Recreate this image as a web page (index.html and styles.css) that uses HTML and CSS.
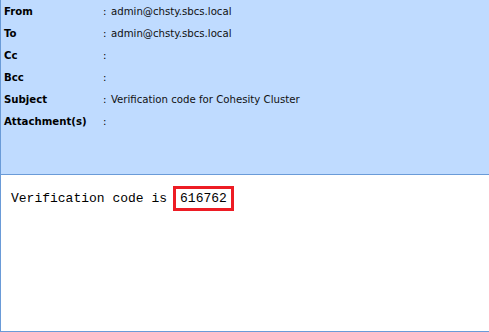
FILE: index.html
```html
<!DOCTYPE html>
<html>
<head>
  <meta charset="UTF-8">
  <link rel="stylesheet" href="styles.css">
</head>
<body>
  <div class="mail">
    <div class="mail-header">
      <div class="field">
        <span class="field-label">From</span>
        <span class="field-colon">:</span>
        <span class="field-value">admin@chsty.sbcs.local</span>
      </div>
      <div class="field">
        <span class="field-label">To</span>
        <span class="field-colon">:</span>
        <span class="field-value">admin@chsty.sbcs.local</span>
      </div>
      <div class="field">
        <span class="field-label">Cc</span>
        <span class="field-colon">:</span>
        <span class="field-value"></span>
      </div>
      <div class="field">
        <span class="field-label">Bcc</span>
        <span class="field-colon">:</span>
        <span class="field-value"></span>
      </div>
      <div class="field">
        <span class="field-label">Subject</span>
        <span class="field-colon">:</span>
        <span class="field-value">Verification code for Cohesity Cluster</span>
      </div>
      <div class="field">
        <span class="field-label">Attachment(s)</span>
        <span class="field-colon">:</span>
        <span class="field-value"></span>
      </div>
    </div>
    <div class="mail-body">
      <div class="mail-text">Verification code is<span class="code-box">616762</span></div>
    </div>
  </div>
</body>
</html>
```

FILE: styles.css
```css
body {
  margin: 0;
  background-color: #ffffff;
}
.mail {
  height: 331px;
  border-left: 1px solid #6a9bd8;
  border-bottom: 1px solid #6a9bd8;
  display: flex;
  flex-direction: column;
}
.mail-header {
  height: 174px;
  background-color: #bfdbff;
  border-bottom: 1px solid #6a9bd8;
  font-family: 'DejaVu Sans Condensed', 'DejaVu Sans', sans-serif;
  font-size: 11.3px;
  color: #000000;
}
.field {
  display: flex;
  align-items: center;
  height: 22px;
}
.field-label {
  width: 99px;
  padding-left: 3px;
  font-weight: bold;
}
.field-colon {
  width: 8px;
}
.field-value {
  color: #111111;
}
.mail-body {
  flex: 1;
  padding: 11px 0 0 10px;
}
.mail-text {
  font-family: 'Liberation Mono', 'Courier New', monospace;
  font-size: 13px;
  color: #000000;
  line-height: 25px;
}
.code-box {
  display: inline-block;
  margin-left: 6px;
  border: 3px solid #ed1c24;
  padding: 0 4px;
  line-height: 19px;
}
```
